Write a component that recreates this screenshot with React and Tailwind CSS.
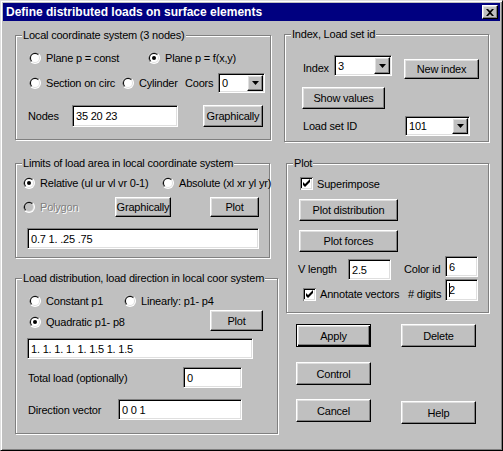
import React from 'react';

const raised = 'border border-t-white border-l-white border-r-black border-b-black shadow-[inset_-1px_-1px_0_#808080,inset_1px_1px_0_#dfdfdf]';
const raisedDefault = 'border border-black shadow-[inset_1px_1px_0_#fff,inset_-1px_-1px_0_#000,inset_-2px_-2px_0_#808080,inset_2px_2px_0_#dfdfdf]';
const sunken = 'border border-t-[#808080] border-l-[#808080] border-b-white border-r-white shadow-[inset_1px_1px_0_#000,inset_-1px_-1px_0_#dfdfdf]';

const Radio = ({ checked, disabled }) => (
  <svg width="12" height="12" viewBox="0 0 12 12" className="shrink-0">
    <circle cx="6" cy="6" r="6" fill="#fff" />
    <path d="M1.76 10.24A6 6 0 0 1 10.24 1.76Z" fill="#808080" />
    <circle cx="6" cy="6" r="5" fill="#dfdfdf" />
    <path d="M2.46 9.54A5 5 0 0 1 9.54 2.46Z" fill="#000" />
    <circle cx="6" cy="6" r="4" fill={disabled ? '#c0c0c0' : '#fff'} />
    {checked && <circle cx="6" cy="6" r="2" fill="#000" />}
  </svg>
);

const RadioItem = ({ label, checked, disabled, className = '' }) => (
  <div className={`flex items-center h-[16px] shrink-0 ${className}`}>
    <Radio checked={checked} disabled={disabled} />
    <span className={`ml-[5px] whitespace-nowrap ${disabled ? 'text-[#808080] [text-shadow:1px_1px_0_#fff]' : ''}`}>{label}</span>
  </div>
);

const CheckBox = () => (
  <svg width="13" height="13" viewBox="0 0 13 13" className="shrink-0">
    <rect width="13" height="13" fill="#fff" />
    <path d="M0 0H13V1H1V13H0Z" fill="#808080" />
    <path d="M1 1H12V2H2V12H1Z" fill="#000" />
    <path d="M11 2H12V12H1V11H11Z" fill="#dfdfdf" />
    <path d="M3 5L5 7L10 2V5L5 10L3 8Z" fill="#000" />
  </svg>
);

const Field = ({ value, caret, className = '' }) => (
  <div className={`flex items-center shrink-0 bg-white pl-[3px] whitespace-nowrap ${sunken} ${className}`}>
    {caret && <span className="w-[1px] h-[14px] bg-black -mr-[1px]" />}
    {value}
  </div>
);

const Combo = ({ value, className = '' }) => (
  <div className={`flex shrink-0 bg-white p-[1px] ${sunken} ${className}`}>
    <span className="flex-1 flex items-center pl-[2px]">{value}</span>
    <div className={`w-[16px] flex items-center justify-center bg-[#c0c0c0] ${raised}`}>
      <svg width="7" height="4" viewBox="0 0 7 4">
        <polygon points="0,0 7,0 3.5,4" fill="#000" />
      </svg>
    </div>
  </div>
);

const Button = ({ children, isDefault, className = '' }) => (
  <div className={`flex items-center justify-center shrink-0 bg-[#c0c0c0] whitespace-nowrap ${isDefault ? raisedDefault : raised} ${className}`}>
    {children}
  </div>
);

const Group = ({ label, className = '', children }) => (
  <div className={`relative shrink-0 border border-[#808080] shadow-[inset_1px_1px_0_#fff,1px_1px_0_#fff] ${className}`}>
    <span className="absolute -top-[8px] left-[6px] px-[1px] bg-[#c0c0c0] leading-[14px] whitespace-nowrap">{label}</span>
    {children}
  </div>
);

const App = () => {
  return (
    <div className="w-[503px] h-[451px] bg-[#c0c0c0] p-[2px] border border-t-[#dfdfdf] border-l-[#dfdfdf] border-r-black border-b-black shadow-[inset_1px_1px_0_#fff,inset_-1px_-1px_0_#808080] font-['Liberation_Sans',Arial,sans-serif] text-[11px] leading-[14px] tracking-[-0.2px] text-black overflow-hidden">
      {/* Title bar */}
      <div className="h-[18px] bg-[#000080] flex items-start justify-between pl-[3px] pr-[2px]">
        <span className="text-white font-bold text-[12px] leading-[18px] tracking-normal">Define distributed loads on surface elements</span>
        <div className={`mt-[2px] w-[16px] h-[14px] flex items-center justify-center bg-[#c0c0c0] ${raised}`}>
          <svg width="8" height="7" viewBox="0 0 8 7">
            <path d="M0 0H2L4 2L6 0H8L5 3.5L8 7H6L4 5L2 7H0L3 3.5Z" fill="#000" />
          </svg>
        </div>
      </div>

      <div className="flex pl-[12px]">
        {/* Left column */}
        <div className="w-[263px] flex flex-col items-start pt-[14px]">
          <Group label="Local coordinate system (3 nodes)" className="w-[256px] h-[105px]">
            <div className="flex flex-col pt-[14px]">
              <div className="flex items-center h-[16px] pl-[13px]">
                <RadioItem label="Plane p = const" className="w-[119px]" />
                <RadioItem label="Plane p = f(x,y)" checked />
              </div>
              <div className="flex items-center h-[20px] mt-[7px] pl-[13px]">
                <RadioItem label="Section on circ" className="w-[93px]" />
                <RadioItem label="Cylinder" className="w-[63px]" />
                <span className="w-[33px] shrink-0">Coors</span>
                <Combo value="0" className="w-[47px] h-[20px]" />
              </div>
              <div className="flex items-center h-[22px] mt-[12px] pl-[12px]">
                <span className="w-[44px] shrink-0">Nodes</span>
                <Field value="35 20 23" className="w-[106px] h-[22px]" />
                <Button className="ml-[25px] w-[60px] h-[22px]">Graphically</Button>
              </div>
            </div>
          </Group>

          <Group label="Limits of load area in local coordinate system" className="mt-[23px] w-[255px] h-[95px]">
            <div className="flex flex-col items-start pt-[11px]">
              <div className="flex items-center h-[16px] pl-[7px]">
                <RadioItem label="Relative (ul ur vl vr 0-1)" checked className="w-[139px]" />
                <RadioItem label="Absolute (xl xr yl yr)" />
              </div>
              <div className="flex items-center h-[20px] mt-[6px] pl-[7px]">
                <RadioItem label="Polygon" disabled className="w-[92px]" />
                <Button className="w-[56px] h-[20px]">Graphically</Button>
                <Button className="ml-[39px] w-[49px] h-[20px]">Plot</Button>
              </div>
              <Field value="0.7 1. .25 .75" className="mt-[11px] ml-[11px] w-[232px] h-[21px]" />
            </div>
          </Group>

          <Group label="Load distribution, load direction in local coor system" className="mt-[20px] w-[263px] h-[156px]">
            <div className="flex flex-col items-start pt-[14px]">
              <div className="flex items-center h-[16px] pl-[13px]">
                <RadioItem label="Constant p1" className="w-[95px]" />
                <RadioItem label="Linearly: p1- p4" />
              </div>
              <div className="flex items-start h-[21px] mt-[1px] pl-[13px]">
                <RadioItem label="Quadratic p1- p8" checked className="w-[181px] mt-[4px]" />
                <Button className="w-[53px] h-[21px]">Plot</Button>
              </div>
              <Field value="1. 1. 1. 1. 1. 1.5 1. 1.5" className="mt-[7px] ml-[11px] w-[226px] h-[21px]" />
              <div className="flex items-center mt-[8px] pl-[12px]">
                <span className="w-[155px] shrink-0">Total load (optionally)</span>
                <Field value="0" className="w-[59px] h-[21px]" />
              </div>
              <div className="flex items-center mt-[11px] pl-[12px]">
                <span className="w-[90px] shrink-0">Direction vector</span>
                <Field value="0 0 1" className="w-[124px] h-[21px]" />
              </div>
            </div>
          </Group>
        </div>

        {/* Right column */}
        <div className="ml-[6px] flex flex-col items-start pt-[13px]">
          <Group label="Index, Load set id" className="w-[205px] h-[108px]">
            <div className="flex flex-col items-start pt-[20px]">
              <div className="flex items-start pl-[18px]">
                <span className="w-[31px] mt-[6px] shrink-0">Index</span>
                <Combo value="3" className="w-[58px] h-[21px]" />
                <Button className="ml-[12px] mt-[4px] w-[75px] h-[20px]">New index</Button>
              </div>
              <Button className="mt-[8px] ml-[17px] w-[83px] h-[22px]">Show values</Button>
              <div className="flex items-center mt-[7px] pl-[18px]">
                <span className="w-[102px] shrink-0">Load set ID</span>
                <Combo value="101" className="w-[65px] h-[20px]" />
              </div>
            </div>
          </Group>

          <Group label="Plot" className="mt-[21px] ml-[2px] w-[203px] h-[150px]">
            <div className="flex flex-col items-start pt-[13px]">
              <div className="flex items-center h-[13px] pl-[13px]">
                <CheckBox />
                <span className="ml-[4px]">Superimpose</span>
              </div>
              <Button className="mt-[9px] ml-[12px] w-[99px] h-[22px]">Plot distribution</Button>
              <Button className="mt-[9px] ml-[12px] w-[99px] h-[22px]">Plot forces</Button>
              <div className="flex items-start mt-[4px] pl-[11px]">
                <span className="w-[50px] mt-[6px] shrink-0">V length</span>
                <Field value="2.5" className="mt-[3px] w-[43px] h-[21px]" />
                <span className="ml-[13px] w-[41px] mt-[6px] shrink-0">Color id</span>
                <Field value="6" className="w-[33px] h-[21px]" />
              </div>
              <div className="flex items-start -mt-[1px] pl-[16px]">
                <div className="flex items-center w-[105px] h-[16px] mt-[7px] shrink-0">
                  <CheckBox />
                  <span className="ml-[4px] whitespace-nowrap">Annotate vectors</span>
                </div>
                <span className="w-[37px] mt-[8px] shrink-0 whitespace-nowrap"># digits</span>
                <Field value="2" caret className="w-[33px] h-[22px]" />
              </div>
            </div>
          </Group>

          <div className="mt-[11px] ml-[12px] flex flex-col items-start">
            <div className="flex">
              <Button isDefault className="w-[75px] h-[23px]">Apply</Button>
              <Button className="ml-[30px] w-[75px] h-[23px]">Delete</Button>
            </div>
            <Button className="mt-[15px] w-[75px] h-[23px]">Control</Button>
            <div className="flex items-start mt-[14px]">
              <Button className="w-[75px] h-[23px]">Cancel</Button>
              <Button className="ml-[30px] mt-[2px] w-[75px] h-[23px]">Help</Button>
            </div>
          </div>
        </div>
      </div>
    </div>
  );
};

export default App;
